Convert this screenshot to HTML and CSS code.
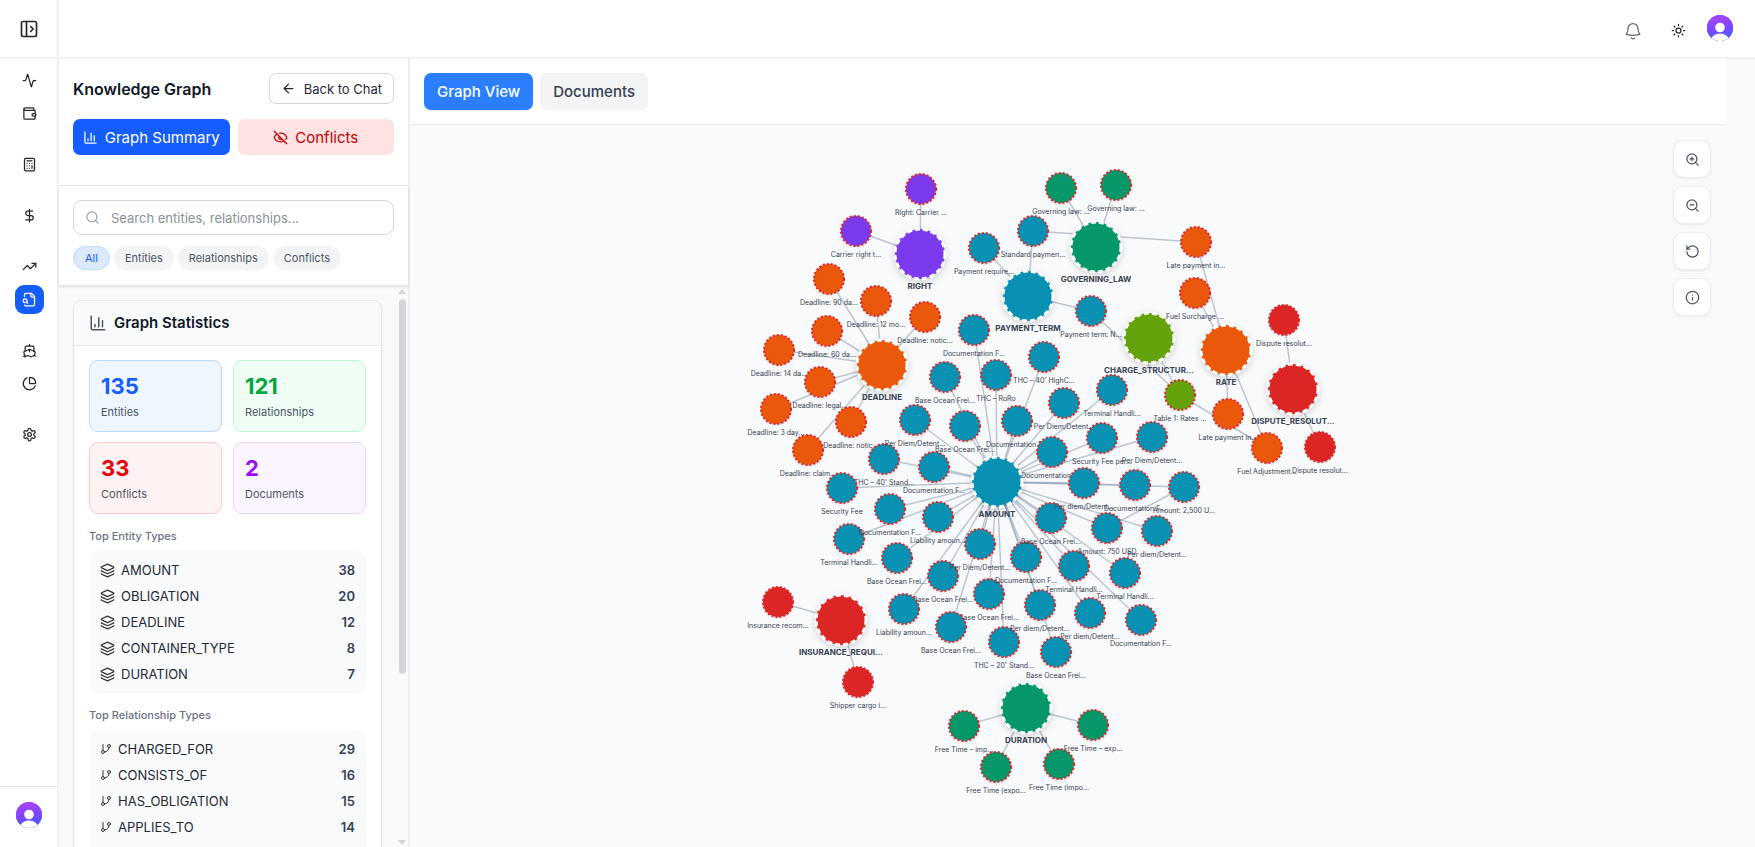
FILE: index.html
```html
<!DOCTYPE html>
<html lang="en">
<head>
<meta charset="utf-8">
<title>Knowledge Graph</title>
<link rel="stylesheet" href="styles.css">
</head>
<body>
<svg class="sprite" aria-hidden="true">
  <symbol id="i-chart" viewBox="0 0 24 24"><path d="M3 3v16a2 2 0 0 0 2 2h16M18 17V9M13 17V5M8 17v-3"/></symbol>
  <symbol id="i-layers" viewBox="0 0 24 24"><path d="M12.83 2.18a2 2 0 0 0-1.66 0L2.6 6.08a1 1 0 0 0 0 1.83l8.58 3.91a2 2 0 0 0 1.66 0l8.58-3.9a1 1 0 0 0 0-1.83z"/><path d="M2 12a1 1 0 0 0 .58.91l8.6 3.91a2 2 0 0 0 1.65 0l8.58-3.9A1 1 0 0 0 22 12"/><path d="M2 17a1 1 0 0 0 .58.91l8.6 3.91a2 2 0 0 0 1.65 0l8.58-3.9A1 1 0 0 0 22 17"/></symbol>
  <symbol id="i-branch" viewBox="0 0 24 24"><path d="M6 3v12"/><circle cx="18" cy="6" r="3"/><circle cx="6" cy="18" r="3"/><path d="M18 9a9 9 0 0 1-9 9"/></symbol>
  <symbol id="i-avatar" viewBox="0 0 26 26">
    <defs>
      <linearGradient id="avatar-fill" x1="0.75" y1="0.1" x2="0.9" y2="0.95"><stop offset="0" stop-color="#a044ff"/><stop offset="0.45" stop-color="#7c46ff"/><stop offset="1" stop-color="#3d62ff"/></linearGradient>
      <clipPath id="avatar-clip"><circle cx="13" cy="13" r="13"/></clipPath>
    </defs>
    <g clip-path="url(#avatar-clip)" stroke="none"><rect width="26" height="26" fill="#6c47ff"/><rect width="26" height="26" fill="url(#avatar-fill)"/><circle cx="13" cy="12.5" r="4.8" fill="#fff"/><ellipse cx="13" cy="25" rx="9" ry="6.5" fill="#fff"/></g>
  </symbol>
</svg>

<div class="app">
  <aside class="rail">
    <div class="rail-top">
      <button class="icon-button" aria-label="Open sidebar"><svg class="icon icon-20" viewBox="0 0 24 24"><rect x="3" y="3" width="18" height="18" rx="2"/><path d="M9 3v18M14 9l3 3-3 3"/></svg></button>
    </div>
    <nav class="rail-nav" aria-label="Main">
      <div class="rail-group">
        <a class="rail-link" href="#" aria-label="Activity"><svg class="icon" viewBox="0 0 24 24"><path d="M22 12h-2.48a2 2 0 0 0-1.93 1.46l-2.35 8.36a.25.25 0 0 1-.48 0L9.24 2.18a.25.25 0 0 0-.48 0l-2.35 8.36A2 2 0 0 1 4.49 12H2"/></svg></a>
        <a class="rail-link" href="#" aria-label="Wallet"><svg class="icon" viewBox="0 0 24 24"><path d="M19 7V4a1 1 0 0 0-1-1H5a2 2 0 0 0 0 4h15a1 1 0 0 1 1 1v4h-3a2 2 0 0 0 0 4h3a1 1 0 0 0 1-1v-2a1 1 0 0 0-1-1"/><path d="M3 5v14a2 2 0 0 0 2 2h15a1 1 0 0 0 1-1v-4"/></svg></a>
      </div>
      <div class="rail-group">
        <a class="rail-link" href="#" aria-label="Calculator"><svg class="icon" viewBox="0 0 24 24"><rect x="4" y="2" width="16" height="20" rx="2"/><path d="M8 6h8M16 14v4M16 10h.01M12 10h.01M8 10h.01M12 14h.01M8 14h.01M12 18h.01M8 18h.01"/></svg></a>
      </div>
      <div class="rail-group">
        <a class="rail-link" href="#" aria-label="Pricing"><svg class="icon" viewBox="0 0 24 24"><path d="M12 2v20M17 5H9.500a3.500 3.500 0 0 0 0 7h5a3.500 3.500 0 0 1 0 7H6"/></svg></a>
      </div>
      <div class="rail-group">
        <a class="rail-link" href="#" aria-label="Trends"><svg class="icon" viewBox="0 0 24 24"><path d="m22 7-8.500 8.500-5-5L2 17"/><path d="M16 7h6v6"/></svg></a>
        <a class="rail-link rail-link-active" href="#" aria-label="Contracts" aria-current="page"><svg class="icon" viewBox="0 0 24 24"><path d="M14 2v4a2 2 0 0 0 2 2h4"/><path d="M4.268 21a2 2 0 0 0 1.727 1H18a2 2 0 0 0 2-2V7l-5-5H6a2 2 0 0 0-2 2v3"/><path d="m9 18-1.500-1.500"/><circle cx="5" cy="14" r="3"/></svg></a>
      </div>
      <div class="rail-group">
        <a class="rail-link" href="#" aria-label="Shipping"><svg class="icon" viewBox="0 0 24 24"><path d="M12 10.189V14M12 2v3M19 13V7a2 2 0 0 0-2-2H7a2 2 0 0 0-2 2v6"/><path d="M19.380 20A11.600 11.600 0 0 0 21 14l-8.188-3.639a2 2 0 0 0-1.624 0L3 14a11.600 11.600 0 0 0 2.810 7.760"/><path d="M2 21c.6.5 1.200 1 2.500 1 2.500 0 2.500-2 5-2 1.300 0 1.900.5 2.500 1s1.200 1 2.500 1c2.500 0 2.500-2 5-2 1.300 0 1.900.5 2.500 1"/></svg></a>
        <a class="rail-link" href="#" aria-label="Reports"><svg class="icon" viewBox="0 0 24 24"><path d="M21 12c.552 0 1.005-.449.950-.998a10 10 0 0 0-8.953-8.951c-.550-.055-.998.398-.998.950v8a1 1 0 0 0 1 1z"/><path d="M21.210 15.890A10 10 0 1 1 8 2.830"/></svg></a>
      </div>
      <div class="rail-group">
        <a class="rail-link" href="#" aria-label="Settings"><svg class="icon" viewBox="0 0 24 24"><path d="M12.220 2h-.44a2 2 0 0 0-2 2v.18a2 2 0 0 1-1 1.730l-.43.25a2 2 0 0 1-2 0l-.15-.08a2 2 0 0 0-2.730.73l-.22.38a2 2 0 0 0 .73 2.730l.15.1a2 2 0 0 1 1 1.720v.51a2 2 0 0 1-1 1.740l-.15.09a2 2 0 0 0-.73 2.730l.22.38a2 2 0 0 0 2.730.73l.15-.08a2 2 0 0 1 2 0l.43.25a2 2 0 0 1 1 1.730V20a2 2 0 0 0 2 2h.44a2 2 0 0 0 2-2v-.18a2 2 0 0 1 1-1.730l.43-.25a2 2 0 0 1 2 0l.15.08a2 2 0 0 0 2.730-.73l.22-.39a2 2 0 0 0-.73-2.730l-.15-.08a2 2 0 0 1-1-1.740v-.5a2 2 0 0 1 1-1.740l.15-.09a2 2 0 0 0 .73-2.730l-.22-.38a2 2 0 0 0-2.730-.73l-.15.08a2 2 0 0 1-2 0l-.43-.25a2 2 0 0 1-1-1.730V4a2 2 0 0 0-2-2z"/><circle cx="12" cy="12" r="3"/></svg></a>
      </div>
    </nav>
    <div class="rail-bottom">
      <button class="icon-button" aria-label="Account"><svg class="avatar"><use href="#i-avatar"/></svg></button>
    </div>
  </aside>

  <div class="main">
    <header class="topbar">
      <button class="icon-button" aria-label="Notifications"><svg class="icon icon-bell" viewBox="0 0 24 24"><path d="M14.857 17.082a24 24 0 0 0 5.454-1.310A9 9 0 0 1 18 9.750V9A6 6 0 0 0 6 9v.75a9 9 0 0 1-2.312 6.022c1.733.64 3.560 1.085 5.455 1.310m5.714 0a24 24 0 0 1-5.714 0M10 20.500a3 3 0 0 0 4 0"/></svg></button>
      <button class="icon-button" aria-label="Toggle theme"><svg class="icon" viewBox="0 0 24 24"><circle cx="12" cy="12" r="4"/><path d="M12 2v2M12 20v2M4.930 4.930l1.410 1.410M17.660 17.660l1.410 1.410M2 12h2M20 12h2M6.340 17.660l-1.410 1.410M19.070 4.930l-1.410 1.410"/></svg></button>
      <button class="icon-button topbar-account" aria-label="Account menu"><svg class="avatar"><use href="#i-avatar"/></svg></button>
    </header>

    <div class="content">
      <section class="panel">
        <div class="panel-head">
          <div class="title-row">
            <h1 class="title">Knowledge Graph</h1>
            <button class="back-button"><svg class="icon" viewBox="0 0 24 24"><path d="m12 19-7-7 7-7M19 12H5"/></svg>Back to Chat</button>
          </div>
          <div class="mode-row">
            <button class="mode mode-summary"><svg class="icon"><use href="#i-chart"/></svg>Graph Summary</button>
            <button class="mode mode-conflicts"><svg class="icon" viewBox="0 0 24 24"><path d="M10.733 5.076a10.744 10.744 0 0 1 11.205 6.575 1 1 0 0 1 0 .696 10.747 10.747 0 0 1-1.444 2.490M14.084 14.158a3 3 0 0 1-4.242-4.242M17.479 17.499a10.750 10.750 0 0 1-15.417-5.151 1 1 0 0 1 0-.696 10.750 10.750 0 0 1 4.446-5.143M2 2l20 20"/></svg>Conflicts</button>
          </div>
        </div>

        <div class="search-area">
          <label class="search">
            <svg class="icon icon-search" viewBox="0 0 24 24"><circle cx="11" cy="11" r="8"/><path d="m21 21-4.300-4.300"/></svg>
            <input class="search-input" type="text" aria-label="Search" placeholder="Search entities, relationships...">
          </label>
          <div class="chips">
            <button class="chip chip-active">All</button>
            <button class="chip">Entities</button>
            <button class="chip">Relationships</button>
            <button class="chip">Conflicts</button>
          </div>
        </div>

        <div class="scroll-area">
          <div class="card">
            <h2 class="card-head"><svg class="icon icon-18"><use href="#i-chart"/></svg>Graph Statistics</h2>
            <div class="card-body">
              <div class="stats">
                <div class="stat stat-blue"><strong class="stat-value">135</strong><span class="stat-label">Entities</span></div>
                <div class="stat stat-green"><strong class="stat-value">121</strong><span class="stat-label">Relationships</span></div>
                <div class="stat stat-red"><strong class="stat-value">33</strong><span class="stat-label">Conflicts</span></div>
                <div class="stat stat-purple"><strong class="stat-value">2</strong><span class="stat-label">Documents</span></div>
              </div>
              <h3 class="list-title">Top Entity Types</h3>
              <ul class="list">
                <li class="row"><svg class="icon"><use href="#i-layers"/></svg><span class="row-name">AMOUNT</span><span class="row-count">38</span></li>
                <li class="row"><svg class="icon"><use href="#i-layers"/></svg><span class="row-name">OBLIGATION</span><span class="row-count">20</span></li>
                <li class="row"><svg class="icon"><use href="#i-layers"/></svg><span class="row-name">DEADLINE</span><span class="row-count">12</span></li>
                <li class="row"><svg class="icon"><use href="#i-layers"/></svg><span class="row-name">CONTAINER_TYPE</span><span class="row-count">8</span></li>
                <li class="row"><svg class="icon"><use href="#i-layers"/></svg><span class="row-name">DURATION</span><span class="row-count">7</span></li>
              </ul>
              <h3 class="list-title">Top Relationship Types</h3>
              <ul class="list">
                <li class="row"><svg class="icon icon-12"><use href="#i-branch"/></svg><span class="row-name">CHARGED_FOR</span><span class="row-count">29</span></li>
                <li class="row"><svg class="icon icon-12"><use href="#i-branch"/></svg><span class="row-name">CONSISTS_OF</span><span class="row-count">16</span></li>
                <li class="row"><svg class="icon icon-12"><use href="#i-branch"/></svg><span class="row-name">HAS_OBLIGATION</span><span class="row-count">15</span></li>
                <li class="row"><svg class="icon icon-12"><use href="#i-branch"/></svg><span class="row-name">APPLIES_TO</span><span class="row-count">14</span></li>
                <li class="row"><svg class="icon icon-12"><use href="#i-branch"/></svg><span class="row-name">MUST_OCCUR_WITHIN</span><span class="row-count">11</span></li>
              </ul>
            </div>
          </div>
          <div class="scrollbar" aria-hidden="true">
            <span class="arrow arrow-up"></span>
            <span class="track"><span class="thumb"></span></span>
            <span class="arrow arrow-down"></span>
          </div>
        </div>
      </section>

      <main class="workspace">
        <div class="tabs">
          <button class="tab tab-active">Graph View</button>
          <button class="tab">Documents</button>
        </div>
        <div class="canvas">
          <svg id="graph" class="graph" viewBox="410 125 1316 722" role="img" aria-label="Entity graph"></svg>
          <div class="tools">
            <button class="tool" aria-label="Zoom in"><svg class="icon" viewBox="0 0 24 24"><circle cx="11" cy="11" r="8"/><path d="m21 21-4.350-4.350M11 8v6M8 11h6"/></svg></button>
            <button class="tool" aria-label="Zoom out"><svg class="icon" viewBox="0 0 24 24"><circle cx="11" cy="11" r="8"/><path d="m21 21-4.350-4.350M8 11h6"/></svg></button>
            <button class="tool" aria-label="Reset view"><svg class="icon" viewBox="0 0 24 24"><path d="M3 12a9 9 0 1 0 9-9 9.750 9.750 0 0 0-6.740 2.740L3 8"/><path d="M3 3v5h5"/></svg></button>
            <button class="tool" aria-label="Information"><svg class="icon" viewBox="0 0 24 24"><circle cx="12" cy="12" r="10"/><path d="M12 16v-4M12 8h.01"/></svg></button>
          </div>
        </div>
      </main>
    </div>
  </div>
</div>
<script src="graph.js"></script>
</body>
</html>
```
FILE: styles.css
```css
* { box-sizing: border-box; }

body {
  margin: 0;
  font-family: Inter, "Liberation Sans", sans-serif;
  font-size: 13px;
  line-height: 20px;
  color: #1f2937;
  background: #fafafa;
}

h1, h2, h3, ul { margin: 0; padding: 0; }
ul { list-style: none; }
button { font: inherit; color: inherit; margin: 0; padding: 0; border: 0; background: none; cursor: pointer; }

.sprite { position: absolute; width: 0; height: 0; }

.icon {
  display: block;
  flex: none;
  width: 15px;
  height: 15px;
  fill: none;
  stroke: currentColor;
  stroke-width: 2;
  stroke-linecap: round;
  stroke-linejoin: round;
}
.icon-20 { width: 20px; height: 20px; }
.icon-18 { width: 18px; height: 18px; }
.icon-12 { width: 12px; height: 12px; }
.icon-bell { width: 20px; height: 20px; stroke-width: 1.5; color: #666; }
.icon-button { display: grid; place-items: center; }
.avatar { display: block; width: 26px; height: 26px; }

.app { display: flex; height: 100vh; overflow: hidden; }

/* Icon rail */
.rail {
  display: flex;
  flex-direction: column;
  flex: none;
  width: 59px;
  background: #fff;
  border-right: 2px solid #f1f1f1;
  color: #262626;
}
.rail-top { display: grid; place-items: center; height: 59px; padding-left: 1px; border-bottom: 2px solid #f1f1f1; }
.rail-nav { display: flex; flex-direction: column; gap: 22px; flex: 1; padding-top: 7px; }
.rail-group { display: flex; flex-direction: column; align-items: center; gap: 4px; padding-left: 1px; }
.rail-link { display: grid; place-items: center; width: 29px; height: 29px; border-radius: 9px; color: inherit; }
.rail-link-active { background: #155dfc; color: #fff; }
.rail-bottom { display: grid; place-items: center; height: 61px; padding: 0 0 5px 1px; border-top: 1px solid #e5e7eb; }

/* Top bar */
.main { display: flex; flex-direction: column; flex: 1; min-width: 0; }
.topbar {
  display: flex;
  align-items: center;
  justify-content: flex-end;
  flex: none;
  gap: 28px;
  height: 59px;
  padding: 4px 22px 0 0;
  background: #fff;
  border-bottom: 2px solid #f1f1f1;
}
.topbar-account { margin: 0 0 6px -7px; }

.content { display: flex; flex: 1; min-height: 0; padding-right: 29px; }

/* Side panel */
.panel {
  display: flex;
  flex-direction: column;
  flex: none;
  width: 351px;
  background: #fff;
  border-right: 2px solid #eceef0;
}
.panel-head { padding: 14px 14px 30px; border-bottom: 1px solid #e5e7eb; }
.title-row { display: flex; align-items: center; justify-content: space-between; }
.title { font-size: 16px; line-height: 24px; font-weight: 600; color: #101828; }
.back-button {
  display: flex;
  align-items: center;
  gap: 8px;
  height: 31px;
  padding: 0 11px;
  border: 1px solid #d1d5dc;
  border-radius: 7px;
}
.mode-row { display: grid; grid-template-columns: 1fr 1fr; gap: 8px; margin-top: 15px; }
.mode {
  display: flex;
  align-items: center;
  justify-content: center;
  gap: 7px;
  height: 36px;
  padding-top: 1px;
  border-radius: 7px;
  font-size: 15px;
  white-space: nowrap;
}
.mode-summary { background: #155dfc; color: #fff; }
.mode-conflicts { background: #ffe2e2; color: #c10007; }

.search-area {
  position: relative;
  padding: 14px 14px 15px;
  border-bottom: 1px solid #e5e7eb;
  box-shadow: 0 1px 3px rgba(0, 0, 0, 0.12);
}
.search {
  display: flex;
  align-items: center;
  gap: 11px;
  height: 35px;
  padding: 0 11px;
  border: 1px solid #d1d5dc;
  border-radius: 9px;
}
.icon-search { color: #99a1af; }
.search-input { flex: 1; min-width: 0; padding: 0; border: 0; outline: 0; font: inherit; background: none; }
.search-input::placeholder { color: #8b8f96; }
.chips { display: flex; gap: 4px; margin-top: 11px; }
.chip {
  height: 24px;
  padding: 0 10px;
  border: 1px solid transparent;
  border-radius: 12px;
  background: #f3f4f6;
  color: #4a5565;
  font-size: 11px;
  line-height: 16px;
}
.chip-active { padding: 0 11px; background: #dbeafe; border-color: #bedbff; color: #155dfc; }

.scroll-area {
  display: flex;
  flex: 1;
  min-height: 0;
  overflow: hidden;
  background: #f9fafb;
  padding-left: 14px;
}
.card {
  flex: 1;
  align-self: flex-start;
  margin-top: 14px;
  border: 1px solid #e5e7eb;
  border-radius: 9px;
  background: #fff;
  box-shadow: 0 1px 3px rgba(0, 0, 0, 0.08);
  overflow: hidden;
}
.card-head {
  display: flex;
  align-items: center;
  gap: 7px;
  height: 45px;
  padding: 0 15px;
  border-bottom: 1px solid #e5e7eb;
  background: #f9fafb;
  font-size: 15px;
  font-weight: 600;
  color: #101828;
}
.card-head .icon { color: #4a5565; }
.card-body { padding: 14px 15px 15px; }
.stats { display: grid; grid-template-columns: 1fr 1fr; gap: 10px 11px; }
.stat { display: flex; flex-direction: column; height: 72px; padding: 11px; border: 1px solid; border-radius: 9px; }
.stat-value { font-size: 22px; line-height: 29px; font-weight: 700; }
.stat-label { margin-top: 3px; font-size: 11px; line-height: 16px; color: #4a5565; }
.stat-blue { background: #eff6ff; border-color: #bedbff; }
.stat-blue .stat-value { color: #155dfc; }
.stat-green { background: #f0fdf4; border-color: #b9f8cf; }
.stat-green .stat-value { color: #00a63e; }
.stat-red { background: #fef2f2; border-color: #ffc9c9; }
.stat-red .stat-value { color: #e7000b; }
.stat-purple { background: #faf5ff; border-color: #e9d4ff; }
.stat-purple .stat-value { color: #9810fa; }

.list-title { margin: 14px 0 7px; font-size: 11px; line-height: 16px; font-weight: 500; color: #6a7282; }
.list { padding: 6px 11px; border-radius: 9px; background: #f9fafb; }
.row { display: flex; align-items: center; gap: 6px; height: 26px; }
.row .icon { color: #333; }
.row-name { flex: 1; }
.row-count { font-weight: 600; color: #364153; }

.scrollbar { display: flex; flex-direction: column; align-items: center; flex: none; width: 12px; margin-left: 14px; padding: 3px 0 2px; }
.track { flex: 1; width: 7px; margin: 5px 0; }
.thumb { display: block; height: 70%; border-radius: 4px; background: #d1d5dc; }
.arrow { border: 4px solid transparent; }
.arrow-up { border-top: 0; border-bottom: 5px solid #d1d5dc; }
.arrow-down { border-bottom: 0; border-top: 5px solid #d1d5dc; }

/* Workspace */
.workspace { display: flex; flex-direction: column; flex: 1; min-width: 0; background: #f9fafb; }
.tabs { display: flex; gap: 7px; padding: 14px; border-bottom: 1px solid #e5e7eb; background: #fff; }
.tab { height: 37px; padding: 0 13px; border-radius: 7px; background: #f3f4f6; color: #364153; font-size: 15px; font-weight: 500; }
.tab-active { background: #2b7fff; color: #fff; box-shadow: 0 1px 2px rgba(0, 0, 0, 0.1); }
.canvas { position: relative; flex: 1; min-height: 0; background: #f9fafb; }
.graph { display: block; width: 100%; height: 100%; }
.tools { position: absolute; top: 16px; right: 16px; display: flex; flex-direction: column; gap: 10px; }
.tool {
  display: grid;
  place-items: center;
  width: 36px;
  height: 36px;
  border-radius: 9px;
  background: #fff;
  color: #4a5565;
  box-shadow: 0 0 0 1px #eceef0, 0 1px 3px rgba(0, 0, 0, 0.15);
}

.edge { stroke: #94a3b8; stroke-width: 1.5; opacity: 0.6; }
.dot { stroke: #dc2626; stroke-width: 2; stroke-dasharray: 2 2; }
.node-small { filter: drop-shadow(0 1px 1px rgba(0, 0, 0, 0.12)); }
.hub { stroke: #fff; stroke-width: 3; stroke-dasharray: 5 3; }
.node-hub { filter: drop-shadow(0 2px 3px rgba(0, 0, 0, 0.18)); }
.label { font-size: 7px; text-anchor: middle; fill: #374151; }
.label-hub { font-size: 8px; font-weight: 700; }
```
FILE: graph.js
```js
const colors = {
  purple: '#7c3aed', orange: '#ea580c', teal: '#0891b2',
  green: '#059669', lime: '#65a30d', red: '#dc2626'
};

// Each group: colour, hub [x, y, label], then its members [x, y, label, id?].
// Members are painted in list order, so a later one lies over an earlier one.
const groups = [
  { color: 'purple', hub: [920, 254, 'RIGHT'], items: [
    [921, 189, 'Right: Carrier ...'], [856, 231, 'Carrier right t...']] },
  { color: 'orange', hub: [882, 365, 'DEADLINE'], items: [
    [829, 279, 'Deadline: 90 da...'], [876, 301, 'Deadline: 12 mo...'],
    [925, 317, 'Deadline: notic...'], [827, 331, 'Deadline: 60 da...'],
    [779, 350, 'Deadline: 14 da...'], [820, 382, 'Deadline: legal...'],
    [776, 409, 'Deadline: 3 day...'], [851, 422, 'Deadline: notic...'],
    [808, 450, 'Deadline: claim...']] },
  { color: 'teal', hub: [1028, 296, 'PAYMENT_TERM'], items: [
    [984, 248, 'Payment require...'], [1033, 231, 'Standard paymen...', 'standard'],
    [1091, 311, 'Payment term: N...', 'term']] },
  { color: 'green', hub: [1096, 247, 'GOVERNING_LAW'], items: [
    [1061, 188, 'Governing law: ...'], [1116, 185, 'Governing law: ...']] },
  { color: 'lime', hub: [1149, 338, 'CHARGE_STRUCTUR...'], items: [
    [1180, 395, 'Table 1: Rates ...', 'table']] },
  { color: 'orange', hub: [1226, 350, 'RATE'], items: [
    [1196, 242, 'Late payment in...', 'late'], [1195, 293, 'Fuel Surcharge ...'],
    [1228, 414, 'Late payment in...'], [1267, 448, 'Fuel Adjustment...', 'fuel']] },
  { color: 'red', hub: [1293, 389, 'DISPUTE_RESOLUT...'], items: [
    [1284, 320, 'Dispute resolut...'], [1320, 447, 'Dispute resolut...']] },
  { color: 'teal', hub: [997, 482, 'AMOUNT'], items: [
    [974, 330, 'Documentation F...'], [1044, 357, "THC – 40' HighC..."],
    [945, 377, 'Base Ocean Frei...'], [996, 375, 'THC – RoRo'],
    [884, 459, "THC – 40' Stand..."], [842, 488, 'Security Fee'],
    [915, 420, 'Per Diem/Detent...'], [934, 467, 'Documentation F...'],
    [965, 426, 'Base Ocean Frei...'], [1017, 421, 'Documentation F...'],
    [1064, 403, 'Per Diem/Detent...'], [1112, 390, 'Terminal Handli...'],
    [1102, 438, 'Security Fee per...'], [1152, 437, 'Per Diem/Detent...'],
    [849, 539, 'Terminal Handli...'], [890, 509, 'Documentation F...'],
    [938, 517, 'Liability amoun...'], [897, 558, 'Base Ocean Frei...'],
    [943, 576, 'Base Ocean Frei...'], [904, 609, 'Liability amoun...'],
    [989, 594, 'Base Ocean Frei...'], [951, 627, 'Base Ocean Frei...'],
    [980, 544, 'Per Diem/Detent...'], [1026, 557, 'Documentation F...'],
    [1051, 518, 'Base Ocean Frei...'], [1052, 452, 'Documentation F...'],
    [1084, 483, 'Per diem/Detent...'], [1004, 642, "THC – 20' Stand..."],
    [1040, 605, 'Per diem/Detent...'], [1056, 652, 'Base Ocean Frei...'],
    [1090, 613, 'Per diem/Detent...'], [1074, 566, 'Terminal Handli...'],
    [1125, 573, 'Terminal Handli...'], [1141, 620, 'Documentation F...'],
    [1107, 528, 'Amount: 750 USD', 'a750'], [1157, 531, 'Per diem/Detent...'],
    [1135, 485, 'Documentation F...'], [1184, 487, 'Amount: 2,500 U...', 'a2500']] },
  { color: 'red', hub: [841, 620, 'INSURANCE_REQUI...'], items: [
    [778, 602, 'Insurance recom...'], [858, 682, 'Shipper cargo i...']] },
  { color: 'green', hub: [1026, 708, 'DURATION'], items: [
    [964, 726, 'Free Time – imp...'], [996, 767, 'Free Time (expo...'],
    [1059, 764, 'Free Time (impo...'], [1093, 725, 'Free Time – exp...']] }
];

const crossLinks = [['standard', 'late'], ['term', 'table'], ['table', 'fuel'], ['a2500', 'a750']];

const svg = document.getElementById('graph');
const add = (parent, tag, attrs, text) => {
  const el = document.createElementNS('http://www.w3.org/2000/svg', tag);
  for (const name in attrs) el.setAttribute(name, attrs[name]);
  if (text) el.textContent = text;
  parent.appendChild(el);
  return el;
};
const link = (a, b) => add(svg, 'line', { class: 'edge', x1: a[0], y1: a[1], x2: b[0], y2: b[1] });

const byId = {};
groups.forEach(g => g.items.forEach(n => {
  if (n[3]) byId[n[3]] = n;
  link(g.hub, n);
}));
crossLinks.forEach(([a, b]) => link(byId[a], byId[b]));

const drawNode = ([x, y, label], color, isHub) => {
  const g = add(svg, 'g', {});
  const body = add(g, 'g', { class: isHub ? 'node-hub' : 'node-small' });
  add(body, 'circle', { class: isHub ? 'hub' : 'dot', cx: x, cy: y, r: isHub ? 25 : 15, fill: colors[color] });
  add(g, 'text', { class: isHub ? 'label label-hub' : 'label', x, y: y + (isHub ? 35 : 26) }, label);
};
groups.forEach(g => {
  g.items.forEach(n => drawNode(n, g.color, false));
  drawNode(g.hub, g.color, true);
});
```
